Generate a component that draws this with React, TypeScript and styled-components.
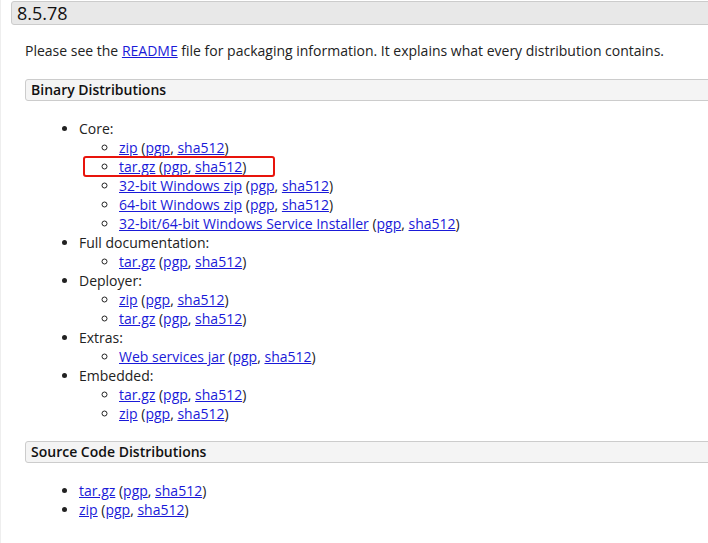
import React from "react";
import styled, { createGlobalStyle } from "styled-components";

const Global = createGlobalStyle`
  html, body { margin: 0; padding: 0; background: #fff; overflow: hidden; }
  body { font-family: "Open Sans", "Noto Sans", sans-serif; font-size: 14px; color: #222; }
`;

const Page = styled.div`
  width: 740px;
  height: 543px;
  border-left: 1px solid #eee;
  box-sizing: border-box;
  padding-top: 1px;
`;

const VersionHeader = styled.h3`
  margin: 0 0 0 10px;
  height: 22px;
  line-height: 22px;
  padding: 0 5px;
  font-size: 18px;
  font-weight: 400;
  background: #e8e8e8;
  border: 1px solid #ccc;
  border-radius: 3px;
  color: #111;
`;

const Content = styled.div`
  padding-left: 24px;
`;

const Para = styled.p`
  margin: 16px 0 19px 0;
  line-height: 19px;
`;

const SubHeader = styled.h4`
  margin: 0;
  height: 20px;
  line-height: 20px;
  padding: 0 5px;
  font-size: 14px;
  font-weight: 600;
  background: #f4f4f4;
  border: 1px solid #ccc;
  border-radius: 3px;
  color: #111;
`;

const Link = styled.a`
  color: #1a1ad8;
  text-decoration: underline;
`;

const List = styled.ul<{ $gapTop: number; $gapBottom: number }>`
  margin: ${(p) => p.$gapTop}px 0 ${(p) => p.$gapBottom}px 0;
  padding-left: 54px;
  list-style: disc;
  line-height: 19px;
`;

const SubList = styled.ul`
  margin: 0;
  padding-left: 40px;
  list-style: circle;
  line-height: 19px;
`;

const Item = styled.li`
  position: relative;
`;

const Highlight = styled.span`
  position: absolute;
  left: -36px;
  top: -1px;
  width: 188px;
  height: 17px;
  border: 2px solid #e8140c;
  border-radius: 3px;
  pointer-events: none;
`;

type Dist = { name: string; hl?: boolean };

const Entry: React.FC<{ d: Dist }> = ({ d }) => (
  <Item>
    {d.hl && <Highlight />}
    <Link href="#">{d.name}</Link> (<Link href="#">pgp</Link>, <Link href="#">sha512</Link>)
  </Item>
);

const groups: { label: string; items: Dist[] }[] = [
  {
    label: "Core:",
    items: [
      { name: "zip" },
      { name: "tar.gz", hl: true },
      { name: "32-bit Windows zip" },
      { name: "64-bit Windows zip" },
      { name: "32-bit/64-bit Windows Service Installer" },
    ],
  },
  { label: "Full documentation:", items: [{ name: "tar.gz" }] },
  { label: "Deployer:", items: [{ name: "zip" }, { name: "tar.gz" }] },
  { label: "Extras:", items: [{ name: "Web services jar" }] },
  { label: "Embedded:", items: [{ name: "tar.gz" }, { name: "zip" }] },
];

export default function App() {
  return (
    <Page>
      <Global />
      <VersionHeader>8.5.78</VersionHeader>
      <Content>
        <Para>
          Please see the <Link href="#">README</Link> file for packaging information. It explains what every
          distribution contains.
        </Para>
        <SubHeader>Binary Distributions</SubHeader>
        <List $gapTop={18} $gapBottom={18}>
          {groups.map((g) => (
            <Item key={g.label}>
              {g.label}
              <SubList>
                {g.items.map((d, i) => (
                  <Entry key={i} d={d} />
                ))}
              </SubList>
            </Item>
          ))}
        </List>
        <SubHeader>Source Code Distributions</SubHeader>
        <List $gapTop={18} $gapBottom={0}>
          <Entry d={{ name: "tar.gz" }} />
          <Entry d={{ name: "zip" }} />
        </List>
      </Content>
    </Page>
  );
}
